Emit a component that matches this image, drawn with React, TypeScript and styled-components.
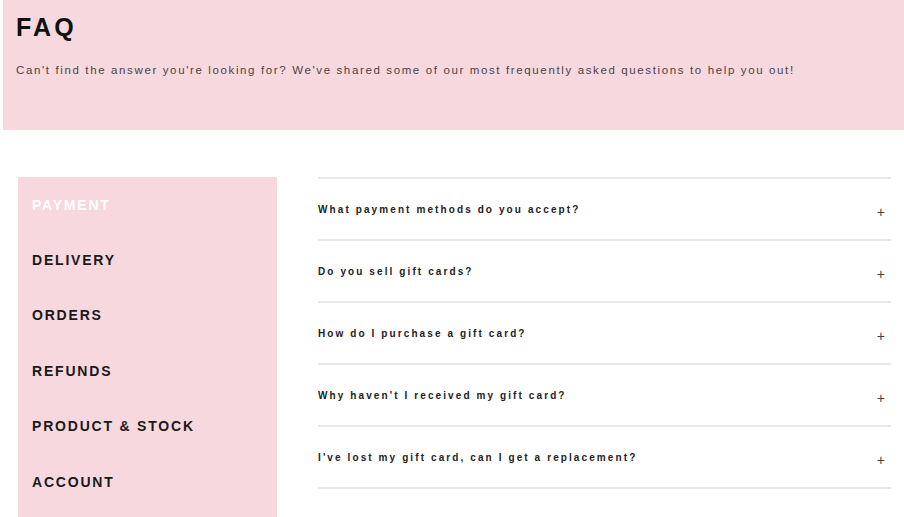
import React from 'react';
import styled, { createGlobalStyle } from 'styled-components';

const categories = ['PAYMENT', 'DELIVERY', 'ORDERS', 'REFUNDS', 'PRODUCT & STOCK', 'ACCOUNT'];

const questions = [
  'What payment methods do you accept?',
  'Do you sell gift cards?',
  'How do I purchase a gift card?',
  "Why haven't I received my gift card?",
  "I've lost my gift card, can I get a replacement?",
];

export default function App() {
  return (
    <>
      <GlobalStyle />
      <Page>
        <Header>
          <Title>FAQ</Title>
          <Intro>
            Can't find the answer you're looking for? We've shared some of our most frequently
            asked questions to help you out!
          </Intro>
        </Header>
        <Main>
          <Sidebar>
            {categories.map((c, i) => (
              <CategoryItem key={c} $active={i === 0}>
                {c}
              </CategoryItem>
            ))}
          </Sidebar>
          <QuestionList>
            {questions.map((q) => (
              <QuestionRow key={q}>
                <QuestionText>{q}</QuestionText>
                <PlusIcon>+</PlusIcon>
              </QuestionRow>
            ))}
          </QuestionList>
        </Main>
      </Page>
    </>
  );
}

const GlobalStyle = createGlobalStyle`
  body {
    margin: 0;
    background: #fff;
    font-family: "Liberation Sans", Arial, sans-serif;
  }
`;

const Page = styled.div`
  width: 904px;
  height: 517px;
  overflow: hidden;
`;

const Header = styled.header`
  margin-left: 3px;
  height: 130px;
  box-sizing: border-box;
  background: #f6d8de;
  padding: 13px 13px 0;
`;

const Title = styled.h1`
  margin: 0;
  font-family: "Liberation Sans", Arial, sans-serif;
  font-size: 25px;
  line-height: 28px;
  font-weight: 700;
  letter-spacing: 3.2px;
  color: #111;
`;

const Intro = styled.p`
  margin: 22px 0 0;
  font-size: 11.5px;
  line-height: 14px;
  letter-spacing: 1.63px;
  color: #4a4446;
`;

const Main = styled.main`
  display: grid;
  grid-template-columns: 259px 573px;
  column-gap: 41px;
  margin: 47px 0 0 18px;
`;

const Sidebar = styled.nav`
  background: #f6d8de;
  height: 360px;
`;

const CategoryItem = styled.div<{ $active?: boolean }>`
  height: 55.4px;
  display: flex;
  align-items: center;
  padding-left: 14px;
  font-size: 14px;
  font-weight: 700;
  letter-spacing: 1.8px;
  color: ${(p) => (p.$active ? '#fff' : '#1a1a1a')};
`;

const QuestionList = styled.div`
  border-top: 2px solid #e8e8e8;
`;

const QuestionRow = styled.div`
  height: 60px;
  border-bottom: 2px solid #e8e8e8;
  display: flex;
  align-items: center;
  justify-content: space-between;
`;

const QuestionText = styled.span`
  font-size: 10px;
  font-weight: 700;
  letter-spacing: 2.1px;
  color: #222;
`;

const PlusIcon = styled.span`
  margin: 5px 6px 0 0;
  font-size: 14px;
  font-weight: 400;
  color: #444;
`;
